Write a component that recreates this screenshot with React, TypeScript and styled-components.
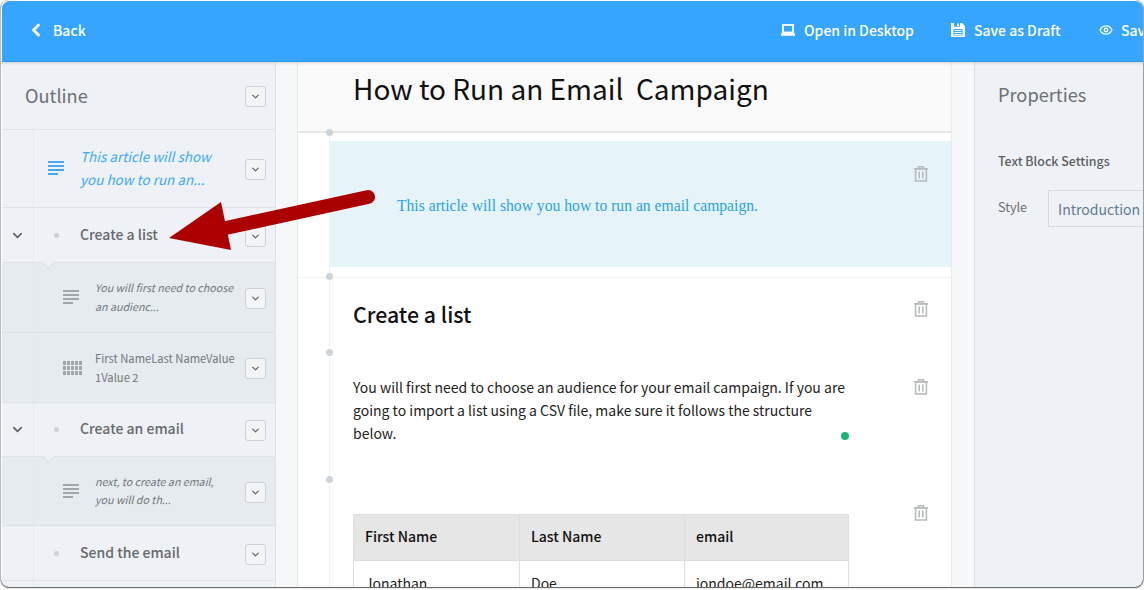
import React from "react";
import styled, { createGlobalStyle } from "styled-components";
import { ChevronLeft, ChevronDown, Eye } from "lucide-react";

const SANS = `"Noto Sans CJK SC", "Source Sans Pro", "Noto Sans", sans-serif`;

const Global = createGlobalStyle`
  html, body { margin: 0; padding: 0; background: #fff; overflow: hidden; }
  body { font-family: ${SANS}; }
  * { box-sizing: border-box; }
`;

const Window = styled.div`
  position: relative;
  width: 1141px;
  height: 586px;
  margin: 1px 0 0 2px;
  border-radius: 8px;
  overflow: hidden;
  display: flex;
  flex-direction: column;
  background: #f5f7f9;
`;
const Frame = styled.div`
  position: absolute;
  left: 1px;
  top: 0;
  width: 1142px;
  height: 587px;
  border-radius: 8px;
  box-shadow: 0 1px 1px rgba(40, 40, 40, 0.75), 1px 0 1px rgba(40, 40, 40, 0.45), -1px 0 1px rgba(40, 40, 40, 0.3);
  pointer-events: none;
`;
const Header = styled.header`
  flex: 0 0 61px;
  background: #36a5ff;
  border-bottom: 1px solid #2e97ee;
  box-shadow: 0 1px 3px rgba(0, 0, 0, 0.14);
  display: flex;
  align-items: center;
  color: #fff;
  position: relative;
  z-index: 2;
  white-space: nowrap;
`;
const BackLink = styled.div`
  flex: 0 0 779px;
  padding-left: 24px;
  display: flex;
  align-items: center;
  gap: 7px;
  font-size: 14px;
  font-weight: 500;
  margin-top: -2px;
`;
const NavItem = styled.div<{ $gap: number; $w: number }>`
  flex: 0 0 ${(p) => p.$w}px;
  display: flex;
  align-items: center;
  gap: ${(p) => p.$gap}px;
  font-size: 14px;
  font-weight: 500;
  margin-top: -2px;
`;
const Body = styled.div`
  flex: 1;
  min-height: 0;
  display: flex;
`;
const Outline = styled.aside`
  flex: 0 0 274px;
  min-width: 0;
  background: #eef1f5;
  border-right: 1px solid #dfe3e8;
  display: flex;
  flex-direction: column;
`;
const OutlineHead = styled.div`
  flex: 0 0 68px;
  border-bottom: 1px solid #e0e4e9;
  display: flex;
  align-items: center;
  justify-content: space-between;
  padding: 0 9px 0 23px;
`;
const PanelTitle = styled.h2`
  margin: -2px 0 0;
  font-size: 18.2px;
  font-weight: 400;
  color: #6c7074;
  line-height: 28px;
`;
const Row = styled.div<{ $h: number; $sub?: boolean; $notch?: boolean }>`
  position: relative;
  flex: 0 0 ${(p) => p.$h}px;
  display: flex;
  align-items: center;
  background: ${(p) => (p.$sub ? "#e6ebef" : "#eef1f5")};
  border-bottom: 1px solid ${(p) => (p.$sub ? "#dde2e7" : "#dfe3e8")};
  padding-right: 9px;
  ${(p) =>
    p.$notch
      ? `&::before {
          content: "";
          position: absolute;
          left: 42px;
          top: -5px;
          width: 8px;
          height: 8px;
          background: #eef1f5;
          border-right: 1px solid #d9dee3;
          border-bottom: 1px solid #d9dee3;
          transform: rotate(45deg);
        }`
      : ""}
`;
const Gutter = styled.div`
  flex: 0 0 32px;
  align-self: stretch;
  border-right: 1px solid #e5e9ed;
  display: flex;
  align-items: center;
  justify-content: center;
  color: #5f6265;
`;
const IconCell = styled.div<{ $w: number; $pl: number }>`
  flex: 0 0 ${(p) => p.$w}px;
  padding-left: ${(p) => p.$pl}px;
  display: flex;
  align-items: center;
`;
const Dot = styled.span`
  width: 5px;
  height: 5px;
  border-radius: 50%;
  background: #ccd1d6;
`;
const RowText = styled.div`
  flex: 1;
  min-width: 0;
  margin-top: -3px;
`;
const Intro = styled(RowText)`
  font-size: 13.5px;
  line-height: 23px;
  font-style: italic;
  color: #40a9f5;
  margin-top: -1px;
`;
const Heading = styled(RowText)`
  font-size: 14px;
  font-weight: 500;
  color: #66696d;
`;
const Note = styled(RowText)<{ $plain?: boolean }>`
  font-size: ${(p) => (p.$plain ? "11.2px" : "10.7px")};
  line-height: 18.5px;
  font-style: ${(p) => (p.$plain ? "normal" : "italic")};
  color: #73777b;
  white-space: nowrap;
  margin-top: 0;
`;
const MenuButton = styled.div`
  flex: 0 0 21px;
  height: 21px;
  margin-top: 2px;
  border: 1px solid #cdd2d7;
  border-radius: 3px;
  background: #f2f4f6;
  display: flex;
  align-items: center;
  justify-content: center;
  color: #5e6266;
`;
const Canvas = styled.main`
  flex: 0 0 655px;
  min-width: 0;
  margin-left: 21px;
  background: #fff;
  border-left: 1px solid #e4e7ea;
  border-right: 1px solid #e9ebee;
  display: flex;
  flex-direction: column;
  overflow: hidden;
`;
const TitleBlock = styled.div`
  flex: 0 0 71px;
  background: #fafafa;
  border-bottom: 2px solid #e6e6e6;
  padding: 6px 0 0 55px;
  font-size: 28px;
  line-height: 41px;
  font-weight: 400;
  color: #111;
  white-space: pre;
  display: flex;
`;
const Section = styled.section<{ $h: number; $ruled?: boolean }>`
  position: relative;
  flex: 0 0 ${(p) => p.$h}px;
  margin-left: 31px;
  border-left: 1px solid #f0f2f4;
  ${(p) =>
    p.$ruled
      ? `&::before {
          content: "";
          position: absolute;
          left: -32px;
          right: 0;
          top: 0;
          height: 1px;
          background: #f0f2f4;
        }`
      : ""}
`;
const Pin = styled.span`
  position: absolute;
  left: -4px;
  top: -4px;
  width: 7px;
  height: 7px;
  border-radius: 50%;
  background: #cdd4dc;
`;
const Trash = styled.span<{ $top: number }>`
  position: absolute;
  left: 584px;
  top: ${(p) => p.$top}px;
  display: flex;
`;
const IntroBand = styled.div`
  margin: 8px 0 0 -1px;
  height: 126px;
  background: #e6f4f9;
  display: flex;
  align-items: center;
  padding-left: 68px;
  padding-top: 3px;
  font-family: "Liberation Serif", serif;
  font-size: 15.65px;
  color: #2ba3e2;
  white-space: nowrap;
`;
const H2 = styled.h2`
  margin: 0;
  padding: 21px 0 0 23px;
  font-size: 21.3px;
  line-height: 32px;
  font-weight: 500;
  color: #111;
`;
const Para = styled.p`
  margin: 0;
  width: 520px;
  padding: 23px 0 0 23px;
  font-size: 14px;
  line-height: 23px;
  color: #222;
`;
const GreenDot = styled.span`
  position: absolute;
  left: 511px;
  top: 79px;
  width: 8px;
  height: 8px;
  border-radius: 50%;
  background: #16b873;
`;
const Table = styled.table`
  margin: 34px 0 0 23px;
  width: 495px;
  table-layout: fixed;
  border-collapse: collapse;
  font-size: 14px;
  color: #222;
`;
const Th = styled.th<{ $w: number }>`
  width: ${(p) => p.$w}px;
  height: 46px;
  padding: 0 11px 3px;
  text-align: left;
  font-weight: 500;
  background: #e6e6e6;
  border: 1px solid #dedede;
  color: #111;
`;
const Td = styled.td`
  height: 44px;
  padding: 0 11px 0;
  border: 1px solid #dedede;
`;
const Properties = styled.aside`
  flex: 1;
  min-width: 0;
  margin-left: 22px;
  background: #eef1f5;
  border-left: 1px solid #d9dee3;
  padding: 20px 0 0 23px;
  overflow: hidden;
  white-space: nowrap;
`;
const SettingsLabel = styled.div`
  margin-top: 43px;
  font-size: 12.4px;
  line-height: 20px;
  font-weight: 500;
  color: #5c6064;
`;
const StyleRow = styled.div`
  margin-top: 19px;
  display: flex;
  align-items: center;
  gap: 21px;
`;
const StyleLabel = styled.span`
  font-size: 12.6px;
  color: #6a6e72;
  margin-top: -4px;
`;
const SelectBox = styled.div`
  flex: 0 0 110px;
  height: 37px;
  border: 1px solid #d6dce1;
  display: flex;
  align-items: center;
  padding: 0 0 0 9px;
  font-size: 14px;
  color: #5f7b93;
`;
const ArrowLayer = styled.svg`
  position: absolute;
  left: -2px;
  top: -1px;
  pointer-events: none;
  z-index: 3;
`;

const Caret = () => (
  <MenuButton>
    <ChevronDown size={11} strokeWidth={2.6} />
  </MenuButton>
);
const TextLines = ({ color }: { color: string }) => (
  <svg width="16" height="15" viewBox="0 0 16 15" fill={color}>
    <rect x="0" y="0" width="16" height="2" />
    <rect x="0" y="4" width="16" height="2" />
    <rect x="0" y="8" width="16" height="2" />
    <rect x="0" y="12" width="10" height="2" />
  </svg>
);
const GridIcon = () => (
  <svg width="19" height="14" viewBox="0 0 19 14" fill="#a3a6a9">
    {[0, 5, 10].map((y) =>
      [0, 4, 8, 12, 16].map((x) => <rect key={`${x}-${y}`} x={x} y={y} width="3" height="4" />)
    )}
  </svg>
);
const LaptopIcon = () => (
  <svg width="14" height="12" viewBox="0 0 14 12" fill="none">
    <rect x="2" y="1" width="10" height="7.5" stroke="#fff" strokeWidth="1.8" />
    <rect x="0" y="9.2" width="14" height="2.6" fill="#fff" />
  </svg>
);
const SaveIcon = () => (
  <svg width="14" height="14" viewBox="0 0 14 14" fill="#fff">
    <path d="M0 0h11l3 3v11H0z" />
    <rect x="3" y="0" width="6" height="3.6" fill="#36a5ff" />
    <rect x="6" y="0.6" width="2" height="2.4" fill="#fff" />
    <rect x="2.5" y="6" width="9" height="6.5" fill="#36a5ff" />
    <rect x="3.5" y="7" width="7" height="1" fill="#fff" />
    <rect x="3.5" y="9" width="7" height="1" fill="#fff" />
    <rect x="3.5" y="11" width="7" height="1" fill="#fff" />
  </svg>
);
const TrashIcon = () => (
  <svg width="14" height="16" viewBox="0 0 14 16" fill="none" stroke="#b9bcbe" strokeWidth="1.6">
    <path d="M0 2.8h14" />
    <path d="M4.5 2.5V.8h5v1.7" />
    <rect x="1.6" y="3" width="10.8" height="12" />
    <path d="M5.2 5.5v7M8.8 5.5v7" />
  </svg>
);

export default function App() {
  return (
    <>
      <Global />
      <Window>
        <Header>
          <BackLink>
            <ChevronLeft size={20} strokeWidth={3.4} />
            Back
          </BackLink>
          <NavItem $gap={9} $w={170}>
            <LaptopIcon />
            Open in Desktop
          </NavItem>
          <NavItem $gap={9} $w={148}>
            <SaveIcon />
            Save as Draft
          </NavItem>
          <NavItem $gap={8} $w={60}>
            <Eye size={14} strokeWidth={2.2} />
            Save
          </NavItem>
        </Header>
        <Body>
          <Outline>
            <OutlineHead>
              <PanelTitle>Outline</PanelTitle>
              <Caret />
            </OutlineHead>
            <Row $h={78}>
              <Gutter />
              <IconCell $w={46} $pl={14}>
                <TextLines color="#40a9f5" />
              </IconCell>
              <Intro>
                This article will show
                <br />
                you how to run an...
              </Intro>
              <Caret />
            </Row>
            <Row $h={55}>
              <Gutter>
                <ChevronDown size={15} strokeWidth={2.6} />
              </Gutter>
              <IconCell $w={46} $pl={20}>
                <Dot />
              </IconCell>
              <Heading>Create a list</Heading>
              <Caret />
            </Row>
            <Row $h={70} $sub $notch>
              <Gutter />
              <IconCell $w={61} $pl={29}>
                <TextLines color="#a3a6a9" />
              </IconCell>
              <Note>
                You will first need to choose
                <br />
                an audienc...
              </Note>
              <Caret />
            </Row>
            <Row $h={70} $sub>
              <Gutter />
              <IconCell $w={61} $pl={29}>
                <GridIcon />
              </IconCell>
              <Note $plain>
                First NameLast NameValue
                <br />
                1Value 2
              </Note>
              <Caret />
            </Row>
            <Row $h={54}>
              <Gutter>
                <ChevronDown size={15} strokeWidth={2.6} />
              </Gutter>
              <IconCell $w={46} $pl={20}>
                <Dot />
              </IconCell>
              <Heading>Create an email</Heading>
              <Caret />
            </Row>
            <Row $h={69} $sub $notch>
              <Gutter />
              <IconCell $w={61} $pl={29}>
                <TextLines color="#a3a6a9" />
              </IconCell>
              <Note>
                next, to create an email,
                <br />
                you will do th...
              </Note>
              <Caret />
            </Row>
            <Row $h={55}>
              <Gutter />
              <IconCell $w={46} $pl={20}>
                <Dot />
              </IconCell>
              <Heading>Send the email</Heading>
              <Caret />
            </Row>
            <Row $h={10}>
              <Gutter />
            </Row>
          </Outline>
          <Canvas>
            <TitleBlock>{"How to Run an Email  Campaign"}</TitleBlock>
            <Section $h={144}>
              <Pin />
              <IntroBand>This article will show you how to run an email campaign.</IntroBand>
              <Trash $top={33}>
                <TrashIcon />
              </Trash>
            </Section>
            <Section $h={76} $ruled>
              <Pin />
              <H2>Create a list</H2>
              <Trash $top={24}>
                <TrashIcon />
              </Trash>
            </Section>
            <Section $h={127}>
              <Pin />
              <Para>
                You will first need to choose an audience for your email campaign. If you are going to import a list
                using a CSV file, make sure it follows the structure below.
              </Para>
              <GreenDot />
              <Trash $top={26}>
                <TrashIcon />
              </Trash>
            </Section>
            <Section $h={170}>
              <Pin />
              <Table>
                <thead>
                  <tr>
                    <Th $w={166}>First Name</Th>
                    <Th $w={165}>Last Name</Th>
                    <Th $w={164}>email</Th>
                  </tr>
                </thead>
                <tbody>
                  <tr>
                    <Td>Jonathan</Td>
                    <Td>Doe</Td>
                    <Td>jondoe@email.com</Td>
                  </tr>
                </tbody>
              </Table>
              <Trash $top={25}>
                <TrashIcon />
              </Trash>
            </Section>
          </Canvas>
          <Properties>
            <PanelTitle>Properties</PanelTitle>
            <SettingsLabel>Text Block Settings</SettingsLabel>
            <StyleRow>
              <StyleLabel>Style</StyleLabel>
              <SelectBox>Introduction</SelectBox>
            </StyleRow>
          </Properties>
        </Body>
        <ArrowLayer width="1144" height="590" viewBox="0 0 1144 590">
          <path d="M368 197 L226 228" stroke="#ab0000" strokeWidth="14" strokeLinecap="round" fill="none" />
          <path d="M169 238 L221 202 L231 250 Z" fill="#ab0000" />
        </ArrowLayer>
      </Window>
      <Frame />
    </>
  );
}
